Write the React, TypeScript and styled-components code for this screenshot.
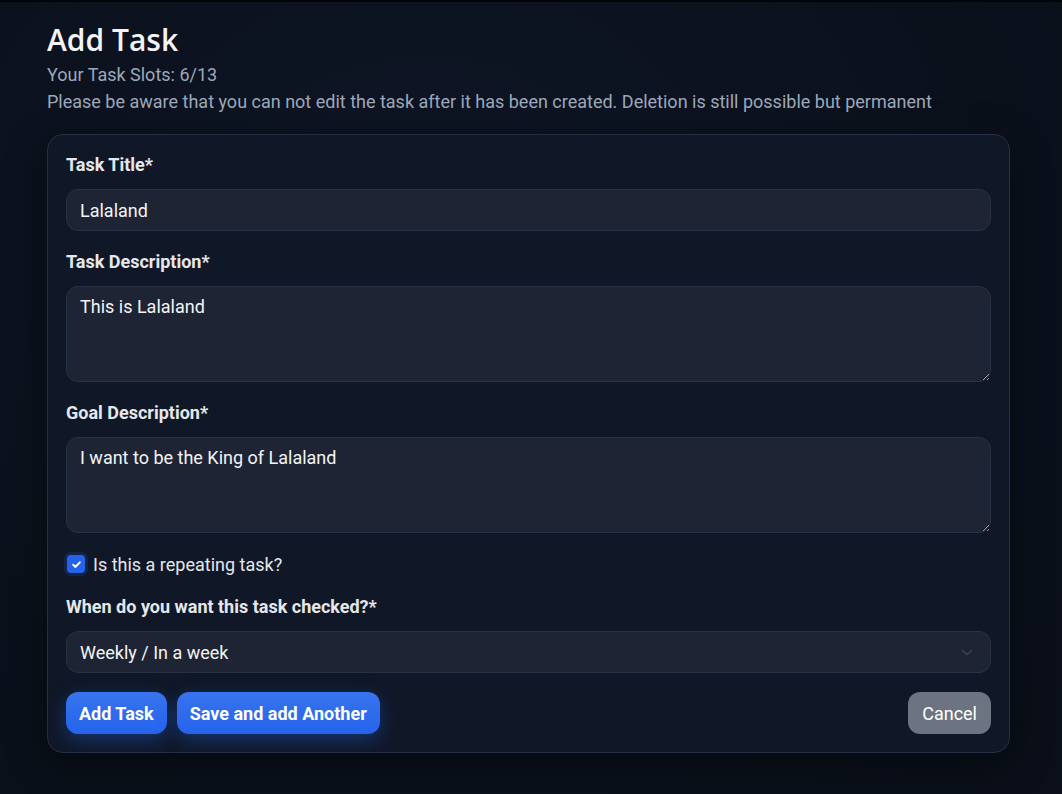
import React from "react";
import styled, { createGlobalStyle } from "styled-components";

const Global = createGlobalStyle`
  html, body { margin: 0; padding: 0; }
  body {
    background: #0b111c;
    font-family: Roboto, "Liberation Sans", sans-serif;
    color: #e5e7eb;
  }
  * { box-sizing: border-box; }
`;

const Page = styled.div`
  min-height: 794px;
  border-top: 2px solid #020408;
  background: radial-gradient(ellipse at 40% 30%, #0e1525 0%, #0b111c 60%, #0a0f19 100%);
  padding: 18px 53px 40px 47px;
`;

const Title = styled.h1`
  margin: 0;
  font-family: "Open Sans", "Noto Sans", sans-serif;
  font-weight: 600;
  font-size: 30px;
  line-height: 40px;
  color: #f3f4f6;
`;

const Sub = styled.p`
  margin: 0;
  font-size: 18px;
  line-height: 27px;
  color: #9ca8ba;
`;

const Header = styled.header`
  display: flex;
  flex-direction: column;
  margin-bottom: 19px;
  & > ${Title} { margin-bottom: 1px; }
`;

const Card = styled.form`
  width: 963px;
  background: #101828;
  border: 1px solid #253044;
  border-radius: 16px;
  padding: 18px;
  display: flex;
  flex-direction: column;
  gap: 19px;
  box-shadow: 0 10px 40px rgba(0, 0, 0, 0.45);
`;

const Field = styled.div`
  display: flex;
  flex-direction: column;
  gap: 12px;
`;

const Label = styled.label`
  font-size: 18px;
  font-weight: 700;
  line-height: 24px;
  color: #e5e7eb;
`;

const Input = styled.input`
  height: 42px;
  width: 100%;
  background: #1e2434;
  border: 1px solid #273246;
  border-radius: 12px;
  padding: 0 13px;
  font-family: Roboto, "Liberation Sans", sans-serif;
  font-size: 18px;
  color: #f3f4f6;
  outline: none;
`;

const TextArea = styled.textarea`
  height: 96px;
  width: 100%;
  background: #1e2434;
  border: 1px solid #273246;
  border-radius: 12px;
  padding: 7px 13px;
  font-family: Roboto, "Liberation Sans", sans-serif;
  font-size: 18px;
  line-height: 26px;
  color: #f3f4f6;
  outline: none;
  resize: vertical;
  display: block;
`;

const SelectWrap = styled.div`
  position: relative;
  height: 42px;
`;

const Select = styled.select`
  appearance: none;
  width: 100%;
  height: 42px;
  background: #1e2434;
  border: 1px solid #273246;
  border-radius: 12px;
  padding: 0 13px;
  font-family: Roboto, "Liberation Sans", sans-serif;
  font-size: 18px;
  color: #f3f4f6;
  outline: none;
`;

const Chevron = styled.svg`
  position: absolute;
  right: 17px;
  top: 16px;
  pointer-events: none;
`;

const CheckRow = styled.label`
  display: flex;
  align-items: center;
  gap: 5px;
  height: 24px;
  font-size: 18px;
  color: #e5e7eb;
`;

const CheckBox = styled.span`
  width: 24px;
  height: 24px;
  border-radius: 7px;
  background: #12244a;
  display: flex;
  align-items: center;
  justify-content: center;
  margin-left: -2px;
`;

const CheckInner = styled.span`
  width: 18px;
  height: 18px;
  border-radius: 4px;
  background: #2563eb;
  display: flex;
  align-items: center;
  justify-content: center;
`;

const Actions = styled.div`
  display: flex;
  align-items: center;
  gap: 10px;
`;

const Spacer = styled.div`
  flex: 1;
`;

const Button = styled.button<{ $variant?: "primary" | "secondary" }>`
  height: 42px;
  padding: 0 ${(p) => (p.$variant === "secondary" ? "14px" : "13px")};
  border: none;
  border-radius: 12px;
  font-family: Roboto, "Liberation Sans", sans-serif;
  font-size: 18px;
  font-weight: ${(p) => (p.$variant === "secondary" ? 400 : 700)};
  color: #ffffff;
  cursor: pointer;
  background: ${(p) =>
    p.$variant === "secondary"
      ? "#6b7480"
      : "linear-gradient(180deg, #3874ee 0%, #2563eb 100%)"};
  box-shadow: ${(p) =>
    p.$variant === "secondary"
      ? "none"
      : "0 6px 18px rgba(37, 99, 235, 0.35)"};
`;

export default function App() {
  return (
    <>
      <Global />
      <Page>
        <Header>
          <Title>Add Task</Title>
          <Sub>Your Task Slots: 6/13</Sub>
          <Sub>
            Please be aware that you can not edit the task after it has been
            created. Deletion is still possible but permanent
          </Sub>
        </Header>
        <Card onSubmit={(e) => e.preventDefault()}>
          <Field>
            <Label>Task Title*</Label>
            <Input defaultValue="Lalaland" />
          </Field>
          <Field>
            <Label>Task Description*</Label>
            <TextArea defaultValue="This is Lalaland" />
          </Field>
          <Field>
            <Label>Goal Description*</Label>
            <TextArea defaultValue="I want to be the King of Lalaland" />
          </Field>
          <CheckRow>
            <CheckBox>
              <CheckInner>
                <svg width="11" height="11" viewBox="0 0 10 10">
                  <path
                    d="M2 5.2 L4.1 7.2 L8 3"
                    stroke="#fff"
                    strokeWidth="1.8"
                    fill="none"
                    strokeLinecap="round"
                    strokeLinejoin="round"
                  />
                </svg>
              </CheckInner>
            </CheckBox>
            Is this a repeating task?
          </CheckRow>
          <Field>
            <Label>When do you want this task checked?*</Label>
            <SelectWrap>
              <Select defaultValue="weekly">
                <option value="daily">Daily / Tomorrow</option>
                <option value="weekly">Weekly / In a week</option>
                <option value="monthly">Monthly / In a month</option>
              </Select>
              <Chevron width="14" height="10" viewBox="0 0 14 10">
                <path
                  d="M2 3 L7 7.5 L12 3"
                  stroke="#3a4252"
                  strokeWidth="1.4"
                  fill="none"
                />
              </Chevron>
            </SelectWrap>
          </Field>
          <Actions>
            <Button type="button">Add Task</Button>
            <Button type="button">Save and add Another</Button>
            <Spacer />
            <Button type="button" $variant="secondary">
              Cancel
            </Button>
          </Actions>
        </Card>
      </Page>
    </>
  );
}
